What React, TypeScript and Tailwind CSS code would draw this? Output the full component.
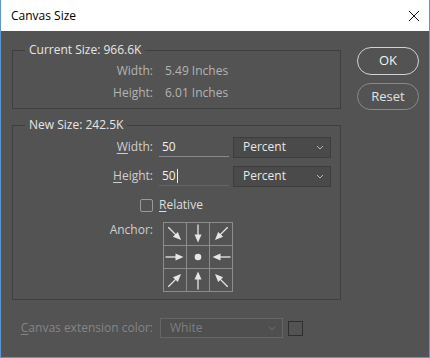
const font = { fontFamily: '"Open Sans", "Noto Sans", sans-serif' };

type Dir = { rot: number } | null;

const anchorCells: Dir[] = [
  { rot: 45 },
  { rot: 90 },
  { rot: 135 },
  { rot: 0 },
  null,
  { rot: 180 },
  { rot: -45 },
  { rot: -90 },
  { rot: -135 },
];

function Chevron({ color = "#b8b8b8" }: { color?: string }) {
  return (
    <svg width="8" height="5" viewBox="0 0 8 5" className="shrink-0">
      <polyline points="1,1 4,4 7,1" fill="none" stroke={color} strokeWidth="1" />
    </svg>
  );
}

function Arrow({ dir }: { dir: Dir }) {
  return (
    <svg width="22" height="22" viewBox="0 0 22 22">
      {dir ? (
        <g transform={`rotate(${dir.rot} 11 11)`} fill="#e6e6e6" stroke="#e6e6e6">
          <line x1="1.5" y1="11" x2="13" y2="11" strokeWidth="1.3" />
          <polygon points="11.5,7.5 19.5,11 11.5,14.5" stroke="none" />
        </g>
      ) : (
        <circle cx="11" cy="11" r="3.3" fill="#e6e6e6" />
      )}
    </svg>
  );
}

export default function App() {
  return (
    <div
      className="flex h-[358px] w-[430px] flex-col overflow-hidden border-x border-b border-[#5b95d6] bg-[#535353] text-[12px]"
      style={font}
    >
      <div className="flex h-[31px] shrink-0 items-center justify-between bg-white pl-[10px] pr-[9px]">
        <span className="text-[12px] text-black">Canvas Size</span>
        <svg width="12" height="12" viewBox="0 0 12 12">
          <path d="M1 1 L11 11 M11 1 L1 11" stroke="#111" strokeWidth="1" />
        </svg>
      </div>

      <div className="flex pl-[11px] pr-[9px] pt-[11px]">
        <div className="flex w-[329px] flex-col">
          <fieldset className="border border-[#3f3f3f] pb-[4px] pt-[2px]">
            <legend className="ml-[12px] px-[4px] leading-[16px] text-[#e6e6e6]">
              Current Size: 966.6K
            </legend>
            <div className="flex h-[22px] items-center text-[#b4b4b4]">
              <span className="w-[140px] text-right">Width:</span>
              <span className="ml-[12px]">5.49 Inches</span>
            </div>
            <div className="flex h-[22px] items-center text-[#b4b4b4]">
              <span className="w-[140px] text-right">Height:</span>
              <span className="ml-[12px]">6.01 Inches</span>
            </div>
          </fieldset>

          <fieldset className="mt-[8px] border border-[#3f3f3f] pb-[7px] pt-[3px]">
            <legend className="ml-[12px] px-[4px] leading-[16px] text-[#e6e6e6]">
              New Size: 242.5K
            </legend>
            <div className="flex h-[22px] items-center">
              <span className="w-[140px] text-right text-[#cfcfcf]">
                <u className="underline-offset-2">W</u>idth:
              </span>
              <div className="ml-[6px] flex h-[20px] w-[70px] items-center border-b border-[#8a8a8a] pl-[3px] text-[#f0f0f0]">
                50
              </div>
              <div className="ml-[4px] flex h-[21px] w-[98px] items-center justify-between border border-[#3d3d3d] bg-[#4a4a4a] pl-[9px] pr-[6px] text-[#e8e8e8]">
                <span>Percent</span>
                <Chevron />
              </div>
            </div>
            <div className="mt-[7px] flex h-[22px] items-center">
              <span className="w-[140px] text-right text-[#cfcfcf]">
                <u className="underline-offset-2">H</u>eight:
              </span>
              <div className="ml-[6px] flex h-[20px] w-[70px] items-center border-b border-[#2f6fbd] pl-[3px] text-[#f0f0f0]">
                50
                <span className="ml-[1px] h-[14px] w-px bg-[#f0f0f0]" />
              </div>
              <div className="ml-[4px] flex h-[21px] w-[98px] items-center justify-between border border-[#3d3d3d] bg-[#4a4a4a] pl-[9px] pr-[6px] text-[#e8e8e8]">
                <span>Percent</span>
                <Chevron />
              </div>
            </div>
            <div className="mt-[10px] flex h-[16px] items-center">
              <div className="flex w-[140px] justify-end">
                <span className="h-[13px] w-[13px] rounded-[2px] border border-[#9a9a9a]" />
              </div>
              <span className="ml-[6px] text-[#dedede]">
                <u className="underline-offset-2">R</u>elative
              </span>
            </div>
            <div className="mt-[9px] flex items-start">
              <span className="w-[140px] text-right leading-[16px] text-[#cfcfcf]">Anchor:</span>
              <div className="ml-[10px] grid grid-cols-[repeat(3,22px)] gap-px border border-[#8c8c8c] bg-[#8c8c8c]">
                {anchorCells.map((dir, i) => (
                  <div key={i} className="flex h-[22px] w-[22px] items-center justify-center bg-[#535353]">
                    <Arrow dir={dir} />
                  </div>
                ))}
              </div>
            </div>
          </fieldset>

          <div className="mt-[18px] flex h-[20px] items-center">
            <span className="w-[141px] text-right text-[#858585]">
              <u className="underline-offset-2">C</u>anvas extension color:
            </span>
            <div className="ml-[7px] flex h-[20px] w-[123px] items-center justify-between border border-[#666666] bg-[#4f4f4f] pl-[9px] pr-[6px] text-[#7e7e7e]">
              <span>White</span>
              <Chevron color="#6e6e6e" />
            </div>
            <span className="ml-[5px] h-[15px] w-[15px] border border-[#2e2e2e]" />
          </div>
        </div>

        <div className="ml-[16px] mt-[5px] flex flex-col gap-[8px]">
          <button className="h-[28px] w-[62px] rounded-full border border-[#d2d2d2] text-[13px] text-[#f2f2f2]">
            OK
          </button>
          <button className="h-[27px] w-[62px] rounded-full border border-[#8a8a8a] text-[13px] text-[#e2e2e2]">
            Reset
          </button>
        </div>
      </div>
    </div>
  );
}
